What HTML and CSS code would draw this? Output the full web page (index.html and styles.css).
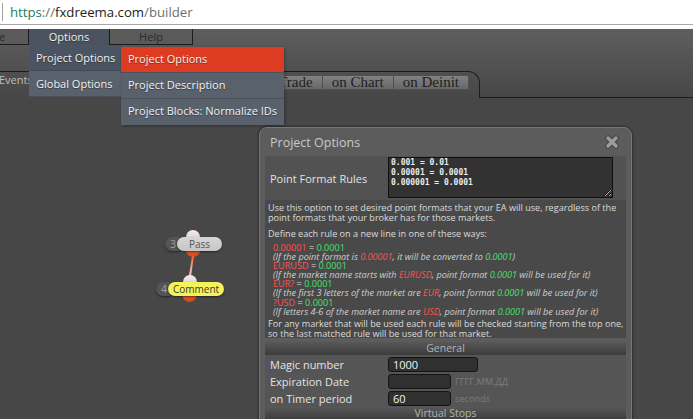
FILE: index.html
```html
<!DOCTYPE html>
<html lang="en">
<head>
    <meta charset="UTF-8">
    <meta name="viewport" content="width=device-width, initial-scale=1.0">
    <title>fxDreema builder</title>
    <link rel="stylesheet" href="styles.css">
</head>
<body>
    <!-- browser address bar -->
    <div class="urlbar">
        <span class="url-edge"></span>
        <span class="url"><span class="scheme">https</span>://<span class="host">fxdreema.com</span>/builder</span>
    </div>
    <div class="urlgap"></div>

    <div class="page">
        <div class="menubar">
            <div class="menu-btn first">File</div>
            <div class="menu-btn open">Options</div>
            <div class="menu-btn help">Help</div>
        </div>

        <div class="tabs-row">
            <div class="tabstrip">
                <span class="events-label">Events</span>
                <div class="tabs">
                    <span class="tab">on Trade</span>
                    <span class="tab">on Chart</span>
                    <span class="tab">on Deinit</span>
                </div>
            </div>
            <div class="tabs-rest"></div>
        </div>

        <!-- blocks on the canvas -->
        <svg class="links" width="80" height="90" viewBox="0 0 80 90">
            <defs>
                <linearGradient id="pin" x1="0" y1="0" x2="0" y2="1">
                    <stop offset="0" stop-color="#f4ecf2"/>
                    <stop offset="1" stop-color="#d5c0cf"/>
                </linearGradient>
                <linearGradient id="out" x1="0" y1="0" x2="0" y2="1">
                    <stop offset="0" stop-color="#f26a2c"/>
                    <stop offset="1" stop-color="#d8461a"/>
                </linearGradient>
                <linearGradient id="wire" x1="0" y1="0" x2="0" y2="1">
                    <stop offset="0" stop-color="#f0602a"/>
                    <stop offset="1" stop-color="#f3d6dc"/>
                </linearGradient>
            </defs>
            <circle cx="43" cy="18" r="7" fill="url(#pin)"/>
            <circle cx="43" cy="31" r="7" fill="url(#out)"/>
            <path d="M43 37 L40 57" stroke="url(#wire)" stroke-width="2" fill="none"/>
            <circle cx="40" cy="63" r="7" fill="url(#pin)"/>
            <circle cx="39.5" cy="76" r="7" fill="url(#out)"/>
        </svg>
        <div class="node node-pass">
            <span class="node-num">3</span>
            <span class="node-pill">Pass</span>
        </div>
        <div class="node node-comment">
            <span class="node-num">4</span>
            <span class="node-pill yellow">Comment</span>
        </div>

        <!-- Options menu -->
        <div class="dropdown">
            <div class="dd-item active">Project Options</div>
            <div class="dd-item">Global Options</div>
        </div>
        <div class="submenu">
            <div class="sub-item hot">Project Options</div>
            <div class="sub-item">Project Description</div>
            <div class="sub-item">Project Blocks: Normalize IDs</div>
        </div>

        <!-- Project Options dialog -->
        <div class="dialog">
            <div class="dialog-head">
                <span>Project Options</span>
                <svg class="close" width="14" height="14" viewBox="0 0 14 14">
                    <path d="M3 3 L11 11 M11 3 L3 11" stroke="#444" stroke-width="5.4" stroke-linecap="round"/>
                    <path d="M3 3 L11 11 M11 3 L3 11" stroke="#9c9c9c" stroke-width="3.4" stroke-linecap="round"/>
                </svg>
            </div>

            <div class="opt-row">
                <span class="opt-label">Point Format Rules</span>
                <textarea class="rules-box" readonly>0.001 = 0.01
0.00001 = 0.0001
0.000001 = 0.0001</textarea>
            </div>

            <div class="desc">
                <p class="para">Use this option to set desired point formats that your EA will use, regardless of the<br>point formats that your broker has for those markets.</p>
                <p class="para gap">Define each rule on a new line in one of these ways:</p>
                <div class="rules">
                    <div><span class="r">0.00001</span> = <span class="g">0.0001</span></div>
                    <div class="note">(If the point format is <span class="r">0.00001</span>, it will be converted to <span class="g">0.0001</span>)</div>
                    <div><span class="r">EURUSD</span> = <span class="g">0.0001</span></div>
                    <div class="note">(If the market name starts with <span class="r">EURUSD</span>, point format <span class="g">0.0001</span> will be used for it)</div>
                    <div><span class="r">EUR?</span> = <span class="g">0.0001</span></div>
                    <div class="note">(If the first 3 letters of the market are <span class="r">EUR</span>, point format <span class="g">0.0001</span> will be used for it)</div>
                    <div><span class="r">?USD</span> = <span class="g">0.0001</span></div>
                    <div class="note">(If letters 4-6 of the market name are <span class="r">USD</span>, point format <span class="g">0.0001</span> will be used for it)</div>
                </div>
                <p class="para">For any market that will be used each rule will be checked starting from the top one,<br>so the last matched rule will be used for that market.</p>
            </div>

            <div class="section-head">General</div>
            <div class="form">
                <div class="form-row">
                    <label>Magic number</label>
                    <input class="field" type="text" value="1000">
                </div>
                <div class="form-row">
                    <label>Expiration Date</label>
                    <input class="field short" type="text" value="">
                    <span class="hint">ГГГГ.ММ.ДД</span>
                </div>
                <div class="form-row">
                    <label>on Timer period</label>
                    <input class="field short" type="text" value="60">
                    <span class="hint">seconds</span>
                </div>
            </div>
            <div class="section-head">Virtual Stops</div>
        </div>
    </div>
</body>
</html>
```

FILE: styles.css
```css
body {
  margin: 0;
  width: 693px;
  height: 419px;
  overflow: hidden;
  font-family: "Open Sans", Arial, sans-serif;
  background: #474747;
}

/* address bar */
.urlbar {
  height: 24px;
  background: #fff;
  border-bottom: 1px solid #a8a8a8;
  display: flex;
  align-items: center;
}

.url-edge {
  width: 1px;
  height: 18px;
  background: #a0a0a0;
  margin: 0 7px 0 2px;
}

.url {
  font-size: 13.2px;
  color: #6e6e6e;
}

.url .scheme {
  color: #227a66;
}

.url .host {
  color: #222;
}

.urlgap {
  height: 4px;
  background: #fff;
}

/* page */
.page {
  position: relative;
  height: 390px;
  background: linear-gradient(#5e5e5e, #474747 69px);
}

.menubar {
  display: flex;
  height: 16px;
}

.menu-btn {
  box-sizing: border-box;
  height: 16px;
  width: 82px;
  text-align: center;
  font-size: 11px;
  line-height: 15px;
  color: #2a2a2a;
  background: #5a5a5a;
  border-right: 1px solid #1c1c1c;
  border-bottom: 1px solid #1c1c1c;
}

.menu-btn.first {
  width: 64px;
  margin-left: -35px;
}

.menu-btn.open {
  width: 81px;
  color: #f0f0f0;
  background: #4b5361;
  border-bottom: 0;
  text-shadow: 0 1px 1px rgba(0, 0, 0, 0.4);
}

.menu-btn.help {
  width: 83px;
}

/* event tabs */
.tabs-row {
  display: flex;
  height: 53px;
}

.tabstrip {
  box-sizing: border-box;
  width: 480px;
  height: 27px;
  margin-top: 26px;
  border-top: 1px solid #1c1c1c;
  border-right: 1px solid #1c1c1c;
  border-top-right-radius: 12px;
  display: flex;
  padding-right: 10px;
}

.events-label {
  font-size: 11px;
  line-height: 15px;
  color: #bdbdbd;
  margin-left: -1px;
}

.tabs {
  display: flex;
  margin-left: auto;
  margin-top: 3px;
  height: 14px;
}

.tab {
  box-sizing: border-box;
  height: 15px;
  padding: 0 9px;
  margin-left: -1px;
  font-family: "Liberation Serif", "Times New Roman", serif;
  font-size: 15px;
  line-height: 13px;
  color: #1e1e1e;
  background: linear-gradient(#828282, #676767);
  border: 1px solid #505050;
}

.tabs-rest {
  flex: 1;
  border-bottom: 1px solid #1c1c1c;
}

/* canvas blocks */
.links {
  position: absolute;
  left: 150px;
  top: 190px;
}

.node {
  position: absolute;
  display: flex;
  height: 14px;
  font-size: 10px;
  line-height: 14px;
}

.node-pass {
  left: 165px;
  top: 208px;
}

.node-comment {
  left: 156px;
  top: 253px;
}

.node-num {
  width: 14px;
  padding-left: 5px;
  box-sizing: border-box;
  margin-right: -2px;
  border-radius: 7px 0 0 7px;
  background: #545454;
  color: #a0a0a0;
  font-size: 10.5px;
  box-shadow: 0 1px 2px rgba(0, 0, 0, 0.5);
}

.node-pill {
  position: relative;
  padding: 0 12px;
  border-radius: 7px;
  background: linear-gradient(#d6d6d6, #c6c6c6);
  color: #555;
  box-shadow: 0 1px 2px rgba(0, 0, 0, 0.5);
}

.node-pill.yellow {
  padding: 0 5px;
  background: #f4f35a;
  color: #3a3a2a;
}

/* options menu */
.dropdown {
  position: absolute;
  left: 29px;
  top: 16px;
  width: 92px;
}

.dd-item {
  height: 25px;
  line-height: 25px;
  padding-left: 7px;
  font-size: 11px;
  color: #f2f2f2;
  background: #59616d;
  border-bottom: 1px solid #4a515b;
  text-shadow: 0 1px 1px rgba(0, 0, 0, 0.4);
}

.dd-item.active {
  background: #4b5462;
  border-bottom-color: #434a55;
}

.submenu {
  position: absolute;
  left: 121px;
  top: 18px;
  width: 163px;
  box-shadow: 1px 1px 3px rgba(0, 0, 0, 0.3);
}

.sub-item {
  height: 25px;
  line-height: 24px;
  padding-left: 7px;
  font-size: 11px;
  color: #f2f2f2;
  background: #59616d;
  border-bottom: 1px solid #4a515b;
  text-shadow: 0 1px 1px rgba(0, 0, 0, 0.4);
}

.sub-item.hot {
  background: #de3c22;
}

.sub-item:last-child {
  height: 26px;
  border-bottom: 0;
}

/* dialog */
.dialog {
  position: absolute;
  left: 259px;
  top: 98px;
  width: 373px;
  height: 330px;
  box-sizing: border-box;
  padding: 0 5px;
  background: #5c5c5c;
  border: 1px solid #777;
  border-radius: 8px 8px 0 0;
  box-shadow: 0 0 2px 1px rgba(0, 0, 0, 0.35);
}

.dialog-head {
  height: 28px;
  display: flex;
  align-items: center;
  justify-content: space-between;
  padding: 0 7px 0 5px;
  font-size: 12.5px;
  color: #c9c9c9;
}

.opt-row {
  display: flex;
  height: 44px;
  background: #525252;
}

.opt-label {
  width: 118px;
  padding-left: 5px;
  align-self: center;
  font-size: 11px;
  color: #e2e2e2;
}

.rules-box {
  box-sizing: border-box;
  width: 225px;
  height: 41px;
  margin: 1px 0 0;
  padding: 0 2px;
  border: 1px solid #111;
  background: #323232;
  color: #ececec;
  font-family: "DejaVu Sans Mono", monospace;
  font-size: 8px;
  font-weight: bold;
  line-height: 10px;
  overflow: hidden;
  resize: both;
  outline: none;
}

.desc {
  box-sizing: border-box;
  height: 138px;
  padding: 3px 3px 0;
  background: #494949;
  color: #dcdcdc;
  font-size: 9.1px;
  white-space: nowrap;
}

.para {
  margin: 0;
  line-height: 10px;
}

.para.gap {
  margin-top: 6px;
}

.rules {
  margin: 4px 0 3px 5px;
  line-height: 9.1px;
}

.rules .note {
  font-style: italic;
  color: #cfcfcf;
}

.r {
  color: #ff5252;
}

.g {
  color: #45e06a;
}

.section-head {
  margin-top: 4px;
  height: 13px;
  line-height: 13px;
  text-align: center;
  font-size: 10.5px;
  color: #b3b3b3;
  background: linear-gradient(#585858, #3c3c3c);
}

.form {
  background: #555;
  padding-top: 1px;
}

.form-row {
  display: flex;
  align-items: center;
  height: 17px;
}

.form-row label {
  width: 118px;
  padding-left: 5px;
  font-size: 11px;
  color: #e4e4e4;
}

.field {
  box-sizing: border-box;
  width: 90px;
  height: 15px;
  padding: 0 4px;
  border: 1px solid #141414;
  border-radius: 3px;
  background: #303030;
  color: #f2f2f2;
  font-family: "Open Sans", Arial, sans-serif;
  font-size: 11px;
  outline: none;
}

.field.short {
  width: 63px;
}

.hint {
  margin-left: 4px;
  font-size: 9.2px;
  color: #7c7c7c;
}

.form + .section-head {
  margin-top: 0;
}
```
